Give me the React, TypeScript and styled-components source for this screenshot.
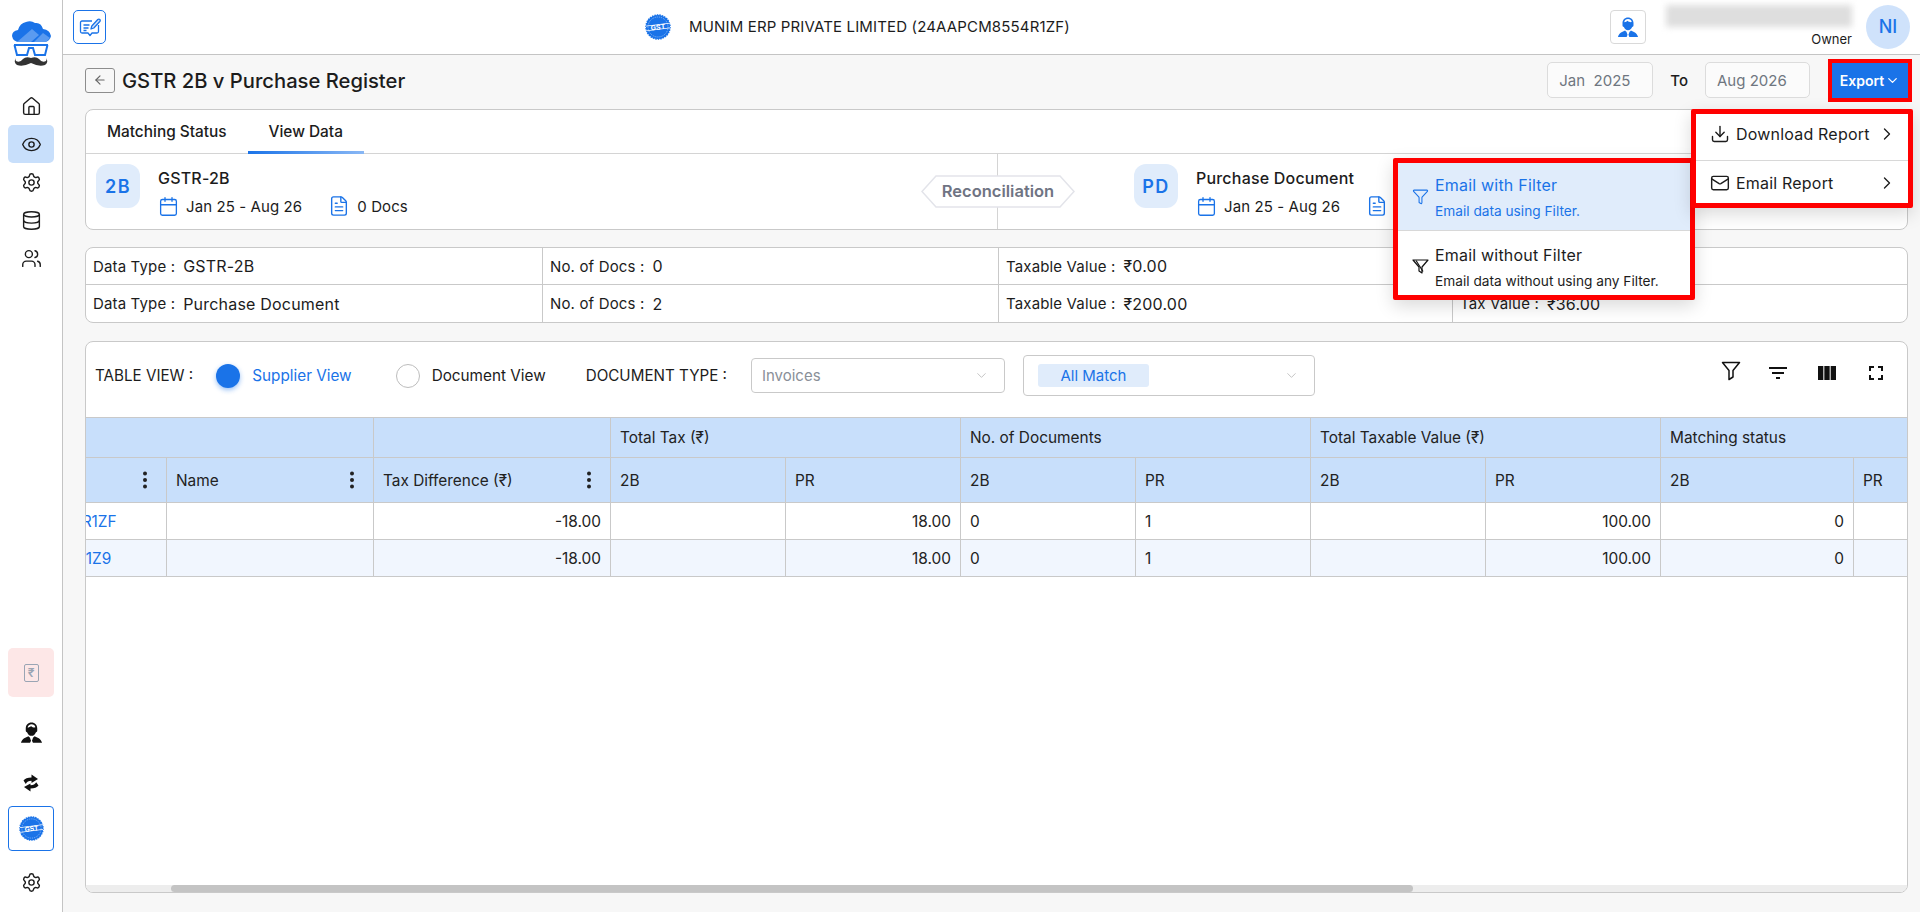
import styled, { createGlobalStyle } from 'styled-components';
import {
  ArrowLeft,
  Calendar,
  ChevronDown,
  ChevronRight,
  Database,
  Download,
  Eye,
  FileText,
  Funnel,
  House,
  Mail,
  Settings,
  Users,
} from 'lucide-react';

const BLUE = '#1a73e8';
const BORDER = '#c9c9c9';

const GlobalStyle = createGlobalStyle`
  html, body, #root { margin: 0; height: 100%; }
  body {
    font-family: Inter, "Noto Sans", "Liberation Sans", sans-serif;
    color: #1c1c1c;
    background: #f7f7f7;
    overflow: hidden;
  }
  * { box-sizing: border-box; }
`;

const Page = styled.div`
  position: relative;
  display: flex;
  width: 1920px;
  height: 912px;
  overflow: hidden;
`;

const Sidebar = styled.aside`
  width: 63px;
  flex: none;
  background: #fff;
  border-right: 1px solid #c4c4c4;
  display: flex;
  flex-direction: column;
  align-items: center;
  padding: 20px 0 12px;
`;

const LogoWrap = styled.div`
  height: 47px;
  margin-bottom: 20px;
  display: flex;
`;

const NavItem = styled.div<{ $active?: boolean; $h?: number }>`
  width: 46px;
  height: ${p => p.$h ?? 38}px;
  display: flex;
  align-items: center;
  justify-content: center;
  border-radius: 5px;
  color: #1c1c1c;
  background: ${p => (p.$active ? '#c8dffb' : 'transparent')};
`;

const SideSpacer = styled.div`
  flex: 1;
`;

const RupeeItem = styled.div`
  width: 46px;
  height: 49px;
  border-radius: 5px;
  background: #fde7e7;
  display: flex;
  align-items: center;
  justify-content: center;
  margin-bottom: 8px;
`;

const RupeeBox = styled.span`
  width: 15px;
  height: 18px;
  border: 1.6px solid #9aa5b4;
  border-radius: 2px;
  color: #9aa5b4;
  font-size: 12px;
  font-weight: 600;
  display: flex;
  align-items: center;
  justify-content: center;
`;

const GstItem = styled.div`
  width: 46px;
  height: 45px;
  margin-bottom: 14px;
  border: 1px solid ${BLUE};
  border-radius: 4px;
  display: flex;
  align-items: center;
  justify-content: center;
`;

const Main = styled.main`
  flex: 1;
  min-width: 0;
  display: flex;
  flex-direction: column;
`;

const Header = styled.header`
  height: 55px;
  flex: none;
  background: #fff;
  border-bottom: 1px solid #c4c4c4;
  display: flex;
  align-items: center;
  padding: 0 10px 1px 10px;
`;

const ComposeButton = styled.div`
  width: 33px;
  height: 34px;
  border: 1px solid ${BLUE};
  border-radius: 5px;
  display: flex;
  align-items: center;
  justify-content: center;
`;

const Company = styled.div`
  margin-left: 539px;
  display: flex;
  align-items: center;
  gap: 18px;
  font-size: 15px;
  letter-spacing: 0.15px;
  white-space: nowrap;
`;

const HeaderRight = styled.div`
  margin-left: auto;
  display: flex;
  align-items: center;
`;

const SupportButton = styled.div`
  width: 36px;
  height: 34px;
  border: 1px solid #d9d9d9;
  border-radius: 4px;
  display: flex;
  align-items: center;
  justify-content: center;
  margin-right: 19px;
`;

const UserBlock = styled.div`
  width: 187px;
  display: flex;
  flex-direction: column;
  align-items: flex-end;
  margin-right: 14px;
`;

const BlurredName = styled.div`
  width: 186px;
  height: 22px;
  background: #dedede;
  filter: blur(3px);
  margin-bottom: 2px;
`;

const Role = styled.div`
  font-size: 13px;
  line-height: 20px;
`;

const Avatar = styled.div`
  width: 44px;
  height: 44px;
  border-radius: 50%;
  background: #cfe2fb;
  color: ${BLUE};
  font-size: 18px;
  font-weight: 500;
  display: flex;
  align-items: center;
  justify-content: center;
`;

const Content = styled.div`
  flex: 1;
  min-height: 0;
  padding: 0 12px 19px 22px;
  display: flex;
  flex-direction: column;
`;

const TitleRow = styled.div`
  height: 54px;
  flex: none;
  display: flex;
  align-items: center;
  padding-bottom: 4px;
`;

const BackButton = styled.div`
  width: 30px;
  height: 25px;
  border: 1px solid #8d8d8d;
  border-radius: 3px;
  display: flex;
  align-items: center;
  justify-content: center;
  color: #666;
  margin-right: 7px;
`;

const Title = styled.h1`
  margin: 0 auto 0 0;
  font-size: 20.2px;
  font-weight: 500;
  white-space: nowrap;
`;

const DateBox = styled.div<{ $w: number }>`
  width: ${p => p.$w}px;
  height: 36px;
  border: 1px solid #dcdcdc;
  border-radius: 5px;
  background: #fbfbfb;
  color: #6f7680;
  font-size: 15px;
  white-space: pre;
  display: flex;
  align-items: center;
  padding-left: 11px;
`;

const ToLabel = styled.span`
  font-size: 15px;
  font-weight: 500;
  margin: 0 17px;
`;

const ExportButton = styled.button`
  width: 76px;
  height: 35px;
  margin-left: 22px;
  border: none;
  background: ${BLUE};
  color: #fff;
  font: 600 14px Inter, sans-serif;
  display: flex;
  align-items: center;
  justify-content: center;
  gap: 1px;
  outline: 4px solid #f00;
`;

const Card = styled.section`
  background: #fff;
  border: 1px solid #c9c9c9;
  border-radius: 8px;
  flex: none;
`;

const TabBar = styled.div`
  height: 44px;
  display: flex;
  border-bottom: 1px solid #d4d4d4;
`;

const Tab = styled.div<{ $active?: boolean }>`
  height: 44px;
  display: flex;
  align-items: center;
  padding: 2px 21px 0;
  font-size: 15.4px;
  font-weight: 500;
  border-bottom: 3px solid transparent;
  border-image: ${p => (p.$active ? `linear-gradient(90deg, ${BLUE}, #8ab8f5) 1` : 'none')};
`;

const InfoRow = styled.div`
  height: 75px;
  display: grid;
  grid-template-columns: 911px 1fr;
  position: relative;
`;

const InfoSide = styled.div`
  display: flex;
  padding: 10px 0 0 10px;
  gap: 18px;
`;

const InfoSideRight = styled(InfoSide)`
  border-left: 1px solid #d4d4d4;
  padding-left: 136px;
`;

const Badge = styled.div<{ $w: number }>`
  width: ${p => p.$w}px;
  height: 44px;
  flex: none;
  border-radius: 12px;
  background: #e0ecfb;
  color: ${BLUE};
  font-size: 18px;
  font-weight: 600;
  letter-spacing: 1.5px;
  display: flex;
  align-items: center;
  justify-content: center;
`;

const InfoText = styled.div`
  display: flex;
  flex-direction: column;
`;

const InfoTitle = styled.div`
  font-size: 16px;
  line-height: 28px;
  font-weight: 500;
  letter-spacing: 0.2px;
  height: 28px;
  white-space: nowrap;
`;

const InfoMeta = styled.div`
  display: flex;
  align-items: center;
  font-size: 15px;
  letter-spacing: 0.1px;
  height: 28px;
  svg { color: ${BLUE}; flex: none; }
`;

const MetaText = styled.span`
  margin: 0 26px 0 7px;
  white-space: nowrap;
`;

const Reconciliation = styled.svg`
  position: absolute;
  left: 835px;
  top: 21px;
`;

const SummaryCard = styled(Card)`
  margin-top: 17px;
  height: 76px;
  display: grid;
  grid-template-columns: 456px 456px 454px 1fr;
  grid-template-rows: 36px 1fr;
`;

const SummaryCell = styled.div<{ $top?: boolean; $first?: boolean }>`
  display: flex;
  align-items: center;
  gap: 8px;
  font-size: 15px;
  letter-spacing: 0.15px;
  padding-left: 7px;
  border-left: ${p => (p.$first ? 'none' : `1px solid ${BORDER}`)};
  border-top: ${p => (p.$top ? 'none' : `1px solid ${BORDER}`)};
  white-space: nowrap;
`;

const SummaryValue = styled.span`
  font-size: 16px;
  letter-spacing: 0.2px;
`;

const TableCard = styled(Card)`
  margin-top: 18px;
  flex: 1;
  min-height: 0;
  display: flex;
  flex-direction: column;
  overflow: hidden;
`;

const Toolbar = styled.div`
  height: 75px;
  flex: none;
  display: flex;
  align-items: center;
  padding: 0 0 8px 9px;
  white-space: nowrap;
`;

const ToolLabel = styled.span<{ $gap?: boolean }>`
  font-weight: 400;
  font-size: 15.2px;
  margin: ${p => (p.$gap ? '0 24px 0 40px' : '0')};
`;

const Radio = styled.span<{ $on?: boolean }>`
  width: 24px;
  height: 24px;
  border-radius: 50%;
  flex: none;
  background: ${p => (p.$on ? BLUE : '#fff')};
  border: ${p => (p.$on ? 'none' : '1px solid #bdbdbd')};
  box-shadow: ${p => (p.$on ? '0 2px 5px rgba(26,115,232,.45)' : 'none')};
  margin: 0 12px 0 ${p => (p.$on ? 23 : 44)}px;
`;

const RadioText = styled.span<{ $on?: boolean }>`
  color: ${p => (p.$on ? BLUE : '#1c1c1c')};
  font-size: 15.3px;
`;

const SelectBox = styled.div<{ $w: number; $h: number; $gap?: number }>`
  width: ${p => p.$w}px;
  height: ${p => p.$h}px;
  margin-left: ${p => p.$gap ?? 0}px;
  border: 1px solid #c9c9c9;
  border-radius: 4px;
  display: flex;
  align-items: center;
  color: #8a8f98;
  font-size: 15px;
  flex: none;
  padding: 0 15px 0 10px;
  justify-content: space-between;
  svg { color: #b0b0b0; }
`;

const SelectChip = styled.span`
  width: 111px;
  height: 23px;
  margin-left: 4px;
  border-radius: 3px;
  background: #e0ecfb;
  color: ${BLUE};
  display: flex;
  align-items: center;
  justify-content: center;
`;

const ToolIcons = styled.div`
  margin-left: auto;
  align-self: flex-start;
  margin-top: 19px;
  display: flex;
  gap: 25px;
  padding-right: 19px;
`;

const TableClip = styled.div`
  flex: 1;
  min-height: 0;
  overflow: hidden;
`;

const Table = styled.table`
  margin-left: -128px;
  border-collapse: collapse;
  table-layout: fixed;
  width: 1950px;
  font-size: 15.4px;
  font-weight: 400;
`;

const GroupTh = styled.th<{ $h: number }>`
  height: ${p => p.$h}px;
  background: #c8dffb;
  border: 1px solid ${BORDER};
  font-weight: 400;
  text-align: left;
  padding: 0 9px;
  color: #222;
  white-space: nowrap;
`;

const ThInner = styled.div`
  display: flex;
  align-items: center;
  justify-content: space-between;
  padding-right: 10px;
`;

const HeadShadow = styled.thead`
  box-shadow: 0 3px 6px rgba(0, 0, 0, 0.08);
`;

const Td = styled.td<{ $right?: boolean; $zebra?: boolean; $link?: boolean }>`
  height: 37px;
  border: 1px solid ${BORDER};
  padding: 0 9px;
  text-align: ${p => (p.$right ? 'right' : 'left')};
  background: ${p => (p.$zebra ? '#f1f6fe' : '#fff')};
  color: ${p => (p.$link ? BLUE : '#222')};
  white-space: nowrap;
`;

const ScrollTrack = styled.div`
  height: 7px;
  flex: none;
  background: #ededed;
`;

const ScrollThumb = styled.div`
  height: 7px;
  width: 1242px;
  margin-left: 85px;
  border-radius: 4px;
  background: #c4c4c4;
`;

const Menu = styled.div<{ $left: number; $top: number; $w: number; $h: number }>`
  position: absolute;
  left: ${p => p.$left}px;
  top: ${p => p.$top}px;
  width: ${p => p.$w}px;
  height: ${p => p.$h}px;
  border: 5px solid #f00;
  border-radius: 2px;
  background: #fff;
  box-shadow: 0 6px 18px rgba(0, 0, 0, 0.15);
  display: flex;
  flex-direction: column;
`;

const MenuRow = styled.div<{ $divider?: boolean }>`
  flex: 1;
  display: flex;
  align-items: center;
  padding: ${p => (p.$divider ? '2px 11px 0 14px' : '0 11px 5px 14px')};
  font-size: 16px;
  font-weight: 400;
  letter-spacing: 0.2px;
  gap: 6px;
  border-top: ${p => (p.$divider ? '1px solid #d8d8d8' : 'none')};
`;

const MenuLabel = styled.span`
  flex: 1;
  white-space: nowrap;
`;

const SubRow = styled.div<{ $active?: boolean }>`
  height: ${p => (p.$active ? '67px' : 'auto')};
  flex: ${p => (p.$active ? 'none' : '1')};
  display: flex;
  align-items: center;
  padding: ${p => (p.$active ? '0' : '7px')} 0 0 14px;
  gap: 6px;
  background: ${p => (p.$active ? '#e0ecfb' : '#fff')};
  color: ${p => (p.$active ? BLUE : '#1c1c1c')};
  border-top: ${p => (p.$active ? 'none' : '1px solid #d8d8d8')};
`;

const SubText = styled.div`
  display: flex;
  flex-direction: column;
  gap: 8px;
  white-space: nowrap;
`;

const SubTitle = styled.span`
  font-size: 16px;
  font-weight: 400;
  letter-spacing: 0.2px;
`;

const SubDesc = styled.span`
  font-size: 13.7px;
`;

function LogoMark() {
  return (
    <svg width="39" height="47" viewBox="0 0 39 47">
      <path d="M8 22 Q1 22 0 16 Q0 11 6 10 Q8 3 14 2 Q19 0 23 3 Q29 2 31 9 Q38 10 39 16 Q38 21 33 22 Z" fill="#1a73e8" />
      <path d="M5 22 L20 9 L27 15 L19 22 Z" fill="#5a9bf0" />
      <path d="M22 22 L31 13 L38 18 L34 22 Z" fill="#5a9bf0" />
      <path d="M2 25 H36 M2.500 25 L5 35 H15 L17 28 H21 L23 35 H33 L35.500 25" fill="none" stroke="#1a73e8" strokeWidth="2" />
      <path d="M19 38 Q14 36 11 39 Q8 43 4 41 Q3 40 4 38 Q1 42 5 45 Q11 47 19 43 Q27 47 33 45 Q37 42 34 38 Q35 40 34 41 Q30 43 27 39 Q24 36 19 38 Z" fill="#333" />
    </svg>
  );
}

function GstSeal({ size }: { size: number }) {
  return (
    <svg width={size} height={size} viewBox="0 0 26 26">
      <circle cx="13" cy="13" r="12" fill={BLUE} stroke={BLUE} strokeWidth="1.500" strokeDasharray="1.500 1" />
      <circle cx="13" cy="13" r="10" fill="none" stroke="#cfe2fb" strokeWidth=".6" strokeDasharray="1 1" />
      <path d="M1 11.700 L25 8.700 V9.400 L1 12.400 Z M1 16.600 L25 13.600 V14.300 L1 17.300 Z" fill="#fff" />
      <text x="13" y="15.700" textAnchor="middle" fontSize="7" fontWeight="700" fill="#fff" fontFamily="Inter, sans-serif" transform="rotate(-7 13 13)">GST</text>
    </svg>
  );
}

function SupportIcon({ color, size }: { color: string; size: number }) {
  return (
    <svg width={size} height={size} viewBox="0 0 24 24" fill={color}>
      <path d="M12 1.500c-3.600 0-6 2.600-6 6.200v2.300c0 1 .6 1.700 1.500 1.900.7 2 2.400 3.600 4.500 3.600s3.800-1.600 4.500-3.600c.9-.2 1.500-.9 1.500-1.900V7.700c0-3.600-2.400-6.200-6-6.200zm0 1.800c2.200 0 3.700 1.300 4.100 3.300-1.500.3-3.400-.2-4.600-1.500-.8 1-2.100 1.500-3.600 1.600.4-2 1.900-3.400 4.100-3.400z" />
      <path d="M8.800 15.800 C6 17.300 2.500 17.800 1 22.800h9.500l1-2.300-1.200-3.200c-.6-.3-1.100-.9-1.500-1.500zM15.200 15.800c-.4.600-.9 1.200-1.500 1.500l-1.200 3.200 1 2.300H23c-1.500-5-5-5.500-7.800-7z" />
    </svg>
  );
}

function ComposeIcon() {
  return (
    <svg width="22" height="22" viewBox="0 0 22 22" fill="none" stroke={BLUE} strokeWidth="1.300" strokeLinejoin="round">
      <path d="M13 5H3a1.500 1.500 0 0 0-1.500 1.500v9A1.500 1.500 0 0 0 3 17h6l2 2.500 2-2.500h5a1.500 1.500 0 0 0 1.500-1.500V9" />
      <path d="M4.500 9h6M4.500 12h5M4.500 14.500h3" strokeWidth="1.500" />
      <path d="M12 13l.8-3 6-6.500c.6-.6 1.500-.6 2 0s.5 1.400 0 2l-6 6.500z" fill="#cfe2fb" />
    </svg>
  );
}

function SwapIcon() {
  return (
    <svg width="18" height="18" viewBox="0 0 18 18" fill="#111">
      <path d="M9.500 0.500 L16 5 L9.500 9 V6.800 C6.500 6.800 5 8 3.800 10 L1.500 6.500 C3 4.800 5.500 3.500 9.500 3.500 Z" />
      <path d="M8.500 17.500 L2 13 L8.500 9.500 V11.300 C11.500 11.300 13 10 14.200 8.200 L16.500 11.500 C15 13.200 12.500 14.500 8.500 14.500 Z" />
    </svg>
  );
}

function FunnelOff() {
  return (
    <svg width="17" height="17" viewBox="0 0 17 17" fill="none" stroke="#111" strokeWidth="1.200" strokeLinejoin="round">
      <path d="M1 2h15l-6 7v6l-3-2V9z" />
      <path d="M4 2.500l7 11" />
    </svg>
  );
}

function LargeFunnel() {
  return (
    <svg width="20" height="20" viewBox="0 0 20 20" fill="none" stroke="#111" strokeWidth="1.500" strokeLinejoin="round">
      <path d="M1.500 1.500h17L12 9.500V16l-4 2.500V9.500z" />
    </svg>
  );
}

function MuiIcon({ d }: { d: string }) {
  return (
    <svg width="24" height="24" viewBox="0 0 24 24" fill="#111">
      <path d={d} />
    </svg>
  );
}

function Dots() {
  return (
    <svg width="4" height="18" viewBox="0 0 4 18" fill="#222">
      <circle cx="2" cy="2.500" r="2" />
      <circle cx="2" cy="9" r="2" />
      <circle cx="2" cy="15.500" r="2" />
    </svg>
  );
}

const COLUMN_WIDTHS = [208, 207, 237, 175, 175, 175, 175, 175, 175, 193, 55];

const ROWS = [
  { gstin: '24AAPCM8554R1ZF', zebra: false },
  { gstin: '24AAPCM8554I1Z9', zebra: true },
];

const SUMMARY = [
  { type: 'GSTR-2B', docs: '0', taxable: '₹0.00', tax: '₹0.00', top: true },
  { type: 'Purchase Document', docs: '2', taxable: '₹200.00', tax: '₹36.00', top: false },
];

export default function App() {
  return (
    <Page>
      <GlobalStyle />
      <Sidebar>
        <LogoWrap>
          <LogoMark />
        </LogoWrap>
        <NavItem><House size={21} strokeWidth={1.6} /></NavItem>
        <NavItem $active><Eye size={21} strokeWidth={1.6} /></NavItem>
        <NavItem><Settings size={21} strokeWidth={1.6} /></NavItem>
        <NavItem><Database size={21} strokeWidth={1.6} /></NavItem>
        <NavItem><Users size={21} strokeWidth={1.6} /></NavItem>
        <SideSpacer />
        <RupeeItem><RupeeBox>₹</RupeeBox></RupeeItem>
        <NavItem $h={55}><SupportIcon color="#111" size={23} /></NavItem>
        <NavItem $h={46}><SwapIcon /></NavItem>
        <GstItem><GstSeal size={25} /></GstItem>
        <NavItem $h={35}><Settings size={21} strokeWidth={1.6} /></NavItem>
      </Sidebar>

      <Main>
        <Header>
          <ComposeButton><ComposeIcon /></ComposeButton>
          <Company>
            <GstSeal size={26} />
            MUNIM ERP PRIVATE LIMITED (24AAPCM8554R1ZF)
          </Company>
          <HeaderRight>
            <SupportButton><SupportIcon color={BLUE} size={22} /></SupportButton>
            <UserBlock>
              <BlurredName />
              <Role>Owner</Role>
            </UserBlock>
            <Avatar>NI</Avatar>
          </HeaderRight>
        </Header>

        <Content>
          <TitleRow>
            <BackButton><ArrowLeft size={14} /></BackButton>
            <Title>GSTR 2B v Purchase Register</Title>
            <DateBox $w={106}>{'Jan  2025'}</DateBox>
            <ToLabel>To</ToLabel>
            <DateBox $w={105}>Aug 2026</DateBox>
            <ExportButton>Export<ChevronDown size={15} /></ExportButton>
          </TitleRow>

          <Card>
            <TabBar>
              <Tab>Matching Status</Tab>
              <Tab $active>View Data</Tab>
            </TabBar>
            <InfoRow>
              <InfoSide>
                <Badge $w={44}>2B</Badge>
                <InfoText>
                  <InfoTitle>GSTR-2B</InfoTitle>
                  <InfoMeta>
                    <Calendar size={21} strokeWidth={1.5} />
                    <MetaText>Jan 25 - Aug 26</MetaText>
                    <FileText size={22} strokeWidth={1.5} />
                    <MetaText>0 Docs</MetaText>
                  </InfoMeta>
                </InfoText>
              </InfoSide>
              <InfoSideRight>
                <Badge $w={44}>PD</Badge>
                <InfoText>
                  <InfoTitle>Purchase Document</InfoTitle>
                  <InfoMeta>
                    <Calendar size={21} strokeWidth={1.5} />
                    <MetaText>Jan 25 - Aug 26</MetaText>
                    <FileText size={22} strokeWidth={1.5} />
                    <MetaText>2 Docs</MetaText>
                  </InfoMeta>
                </InfoText>
              </InfoSideRight>
              <Reconciliation width="154" height="33" viewBox="0 0 154 33">
                <path d="M1 16.500 L15 1 H139 L153 16.500 L139 32 H15 Z" fill="#fff" stroke="#e3e4ea" strokeWidth="1.500" />
                <text x="77" y="21.500" textAnchor="middle" fontSize="16.500" fontWeight="600" fill="#6f7483" fontFamily="Inter, sans-serif">Reconciliation</text>
              </Reconciliation>
            </InfoRow>
          </Card>

          <SummaryCard>
            {SUMMARY.flatMap(row => [
              <SummaryCell key={`${row.type}-type`} $top={row.top} $first>Data Type :<SummaryValue>{row.type}</SummaryValue></SummaryCell>,
              <SummaryCell key={`${row.type}-docs`} $top={row.top}>No. of Docs :<SummaryValue>{row.docs}</SummaryValue></SummaryCell>,
              <SummaryCell key={`${row.type}-taxable`} $top={row.top}>Taxable Value :<SummaryValue>{row.taxable}</SummaryValue></SummaryCell>,
              <SummaryCell key={`${row.type}-tax`} $top={row.top}>Tax Value :<SummaryValue>{row.tax}</SummaryValue></SummaryCell>,
            ])}
          </SummaryCard>

          <TableCard>
            <Toolbar>
              <ToolLabel>TABLE VIEW :</ToolLabel>
              <Radio $on />
              <RadioText $on>Supplier View</RadioText>
              <Radio />
              <RadioText>Document View</RadioText>
              <ToolLabel $gap>DOCUMENT TYPE :</ToolLabel>
              <SelectBox $w={254} $h={35}>
                Invoices
                <ChevronDown size={15} strokeWidth={1.2} />
              </SelectBox>
              <SelectBox $w={292} $h={41} $gap={18}>
                <SelectChip>All Match</SelectChip>
                <ChevronDown size={15} strokeWidth={1.2} />
              </SelectBox>
              <ToolIcons>
                <LargeFunnel />
                <MuiIcon d="M10 18h4v-2h-4v2zM3 6v2h18V6H3zm3 7h12v-2H6v2z" />
                <MuiIcon d="M14.670 5v14H9.330V5h5.340zm1 14H21V5h-5.330v14zm-7.340 0V5H3v14h5.330z" />
                <MuiIcon d="M7 14H5v5h5v-2H7v-3zm-2-4h2V7h3V5H5v5zm12 7h-3v2h5v-5h-2v3zM14 5v2h3v3h2V5h-5z" />
              </ToolIcons>
            </Toolbar>
            <TableClip>
              <Table>
                <colgroup>
                  {COLUMN_WIDTHS.map((w, i) => <col key={i} style={{ width: w }} />)}
                </colgroup>
                <HeadShadow>
                  <tr>
                    <GroupTh $h={40} colSpan={2} />
                    <GroupTh $h={40} />
                    <GroupTh $h={40} colSpan={2}>Total Tax (₹)</GroupTh>
                    <GroupTh $h={40} colSpan={2}>No. of Documents</GroupTh>
                    <GroupTh $h={40} colSpan={2}>Total Taxable Value (₹)</GroupTh>
                    <GroupTh $h={40} colSpan={2}>Matching status</GroupTh>
                  </tr>
                  <tr>
                    <GroupTh $h={45}><ThInner>GSTIN<Dots /></ThInner></GroupTh>
                    <GroupTh $h={45}><ThInner>Name<Dots /></ThInner></GroupTh>
                    <GroupTh $h={45}><ThInner>Tax Difference (₹)<Dots /></ThInner></GroupTh>
                    <GroupTh $h={45}>2B</GroupTh>
                    <GroupTh $h={45}>PR</GroupTh>
                    <GroupTh $h={45}>2B</GroupTh>
                    <GroupTh $h={45}>PR</GroupTh>
                    <GroupTh $h={45}>2B</GroupTh>
                    <GroupTh $h={45}>PR</GroupTh>
                    <GroupTh $h={45}>2B</GroupTh>
                    <GroupTh $h={45}>PR</GroupTh>
                  </tr>
                </HeadShadow>
                <tbody>
                  {ROWS.map(row => (
                    <tr key={row.gstin}>
                      <Td $zebra={row.zebra} $link>{row.gstin}</Td>
                      <Td $zebra={row.zebra} />
                      <Td $zebra={row.zebra} $right>-18.00</Td>
                      <Td $zebra={row.zebra} />
                      <Td $zebra={row.zebra} $right>18.00</Td>
                      <Td $zebra={row.zebra}>0</Td>
                      <Td $zebra={row.zebra}>1</Td>
                      <Td $zebra={row.zebra} />
                      <Td $zebra={row.zebra} $right>100.00</Td>
                      <Td $zebra={row.zebra} $right>0</Td>
                      <Td $zebra={row.zebra} />
                    </tr>
                  ))}
                </tbody>
              </Table>
            </TableClip>
            <ScrollTrack><ScrollThumb /></ScrollTrack>
          </TableCard>
        </Content>
      </Main>

      <Menu $left={1393} $top={158} $w={302} $h={142}>
        <SubRow $active>
          <Funnel size={17} strokeWidth={1.5} />
          <SubText>
            <SubTitle>Email with Filter</SubTitle>
            <SubDesc>Email data using Filter.</SubDesc>
          </SubText>
        </SubRow>
        <SubRow>
          <FunnelOff />
          <SubText>
            <SubTitle>Email without Filter</SubTitle>
            <SubDesc>Email data without using any Filter.</SubDesc>
          </SubText>
        </SubRow>
      </Menu>

      <Menu $left={1691} $top={109} $w={222} $h={99}>
        <MenuRow>
          <Download size={20} strokeWidth={1.7} />
          <MenuLabel>Download Report</MenuLabel>
          <ChevronRight size={20} strokeWidth={1.6} />
        </MenuRow>
        <MenuRow $divider>
          <Mail size={20} strokeWidth={1.7} />
          <MenuLabel>Email Report</MenuLabel>
          <ChevronRight size={20} strokeWidth={1.6} />
        </MenuRow>
      </Menu>
    </Page>
  );
}
